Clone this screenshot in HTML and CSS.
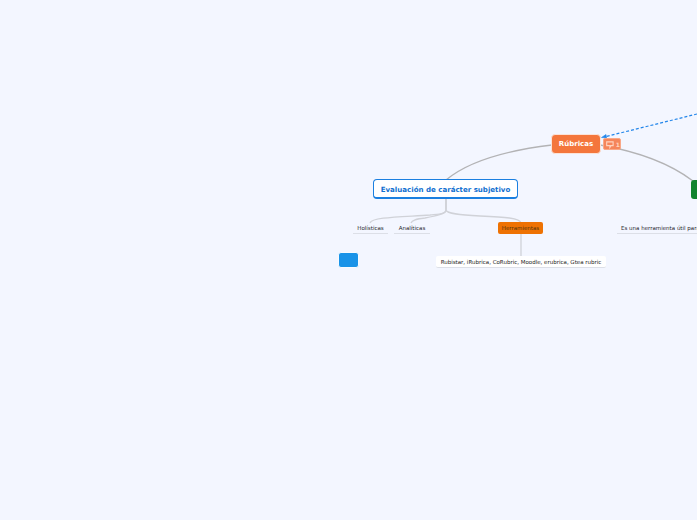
FILE: index.html
```html
<!DOCTYPE html>
<html lang="es">
<head>
<meta charset="utf-8">
<title>Rúbricas</title>
<link rel="stylesheet" href="styles.css">
</head>
<body>
<main class="canvas">
  <svg class="links" width="697" height="520" viewBox="0 0 697 520" fill="none">
    <path class="link" d="M552 145 C510 150 470 160 446 180"/>
    <path class="link" d="M600 145 C640 152 672 165 693 181"/>
    <path class="sub" d="M446 199 V210 C446 214 440 214 430 215 C400 217 372 217 370 223"/>
    <path class="sub" d="M446 199 V210 C446 214 436 216 425 218 C416 219 412 220 411 223"/>
    <path class="sub" d="M446 199 V210 C447 214 460 215 480 216 C505 217 520 218 521 223"/>
    <path class="sub" d="M521 233 V257"/>
    <path class="dash" d="M697 114 L606 136.500"/>
    <path class="arrow" d="M601.500 137.500 L606 134.500 L606.500 138 Z"/>
  </svg>

  <div class="node root">Rúbricas</div>
  <div class="badge">
    <svg width="9" height="9" viewBox="0 0 9 9" fill="none"><path d="M0.800 1.500 H8.200 V5.800 H5.800 L4.500 7.800 V5.800 H0.800 Z" stroke="#ffd2bd" stroke-width="1.300"/></svg>
    <span>1</span>
  </div>
  <div class="node subject">Evaluación de carácter subjetivo</div>
  <div class="node green"></div>
  <div class="node plain holisticas">Holísticas</div>
  <div class="node plain analiticas">Analíticas</div>
  <div class="node tools">Herramientas</div>
  <div class="node plain useful">Es una herramienta útil para</div>
  <div class="node card">Rubistar, iRubrica, CoRubric, Moodle, erubrica, Gtea rubric</div>
  <div class="node blue"></div>
</main>
</body>
</html>
```
FILE: styles.css
```css
html, body {
  margin: 0;
  height: 100%;
  background: #f3f6ff;
  overflow: hidden;
}

.canvas {
  position: relative;
  width: 697px;
  height: 520px;
  overflow: hidden;
  font-family: "DejaVu Sans", sans-serif;
}

.links {
  position: absolute;
  left: 0;
  top: 0;
}

.link {
  stroke: #b3b3b5;
  stroke-width: 1.400;
}

.sub {
  stroke: #d0d2d8;
  stroke-width: 1.300;
}

.dash {
  stroke: #2386ea;
  stroke-width: 1.200;
  stroke-dasharray: 3 2;
}

.arrow {
  fill: #2386ea;
  stroke: #2386ea;
  stroke-width: 0.600;
}

.node {
  position: absolute;
  box-sizing: border-box;
  display: flex;
  align-items: center;
  justify-content: center;
  white-space: nowrap;
}

.root {
  left: 551px;
  top: 134px;
  width: 50px;
  height: 20px;
  background: #f4763c;
  border: 1px solid #fbe3d8;
  border-radius: 4px;
  color: #ffffff;
  font-size: 7px;
  font-weight: 700;
}

.badge {
  position: absolute;
  left: 603px;
  top: 138px;
  width: 18px;
  height: 12px;
  box-sizing: border-box;
  display: flex;
  align-items: center;
  gap: 2px;
  padding-left: 2px;
  background: #f5855a;
  border: 1px solid #f9a888;
  border-radius: 2px;
  color: #ffd2bd;
  font-size: 6px;
  font-weight: 700;
}

.subject {
  left: 373px;
  top: 179px;
  width: 145px;
  height: 20px;
  padding-top: 1px;
  background: #ffffff;
  border: 1px solid #1a7fe0;
  border-bottom-width: 2px;
  border-radius: 4px;
  color: #0f6fd0;
  font-size: 7.050px;
  font-weight: 700;
}

.green {
  left: 691px;
  top: 180px;
  width: 20px;
  height: 19px;
  background: #12842f;
  border-radius: 3px;
}

.plain {
  height: 12px;
  color: #26262c;
  font-size: 5.500px;
  border-bottom: 1px solid #dcdfe7;
}

.holisticas {
  left: 353px;
  top: 222px;
  width: 35px;
}

.analiticas {
  left: 394px;
  top: 222px;
  width: 36px;
}

.tools {
  left: 498px;
  top: 222px;
  width: 45px;
  height: 12px;
  background: #ee7203;
  border-radius: 2px;
  color: #4f3410;
  font-size: 5.500px;
}

.useful {
  left: 617px;
  top: 222px;
  width: 90px;
  justify-content: flex-start;
  padding-left: 4px;
}

.card {
  left: 436px;
  top: 256px;
  width: 170px;
  height: 12px;
  background: #ffffff;
  border-bottom: 1px solid #dcdfe7;
  border-radius: 2px;
  color: #1e1e24;
  font-size: 5.500px;
}

.blue {
  left: 338px;
  top: 252px;
  width: 21px;
  height: 16px;
  background: #1993e8;
  border: 1px solid #f7fbff;
  border-radius: 3px;
}
```
